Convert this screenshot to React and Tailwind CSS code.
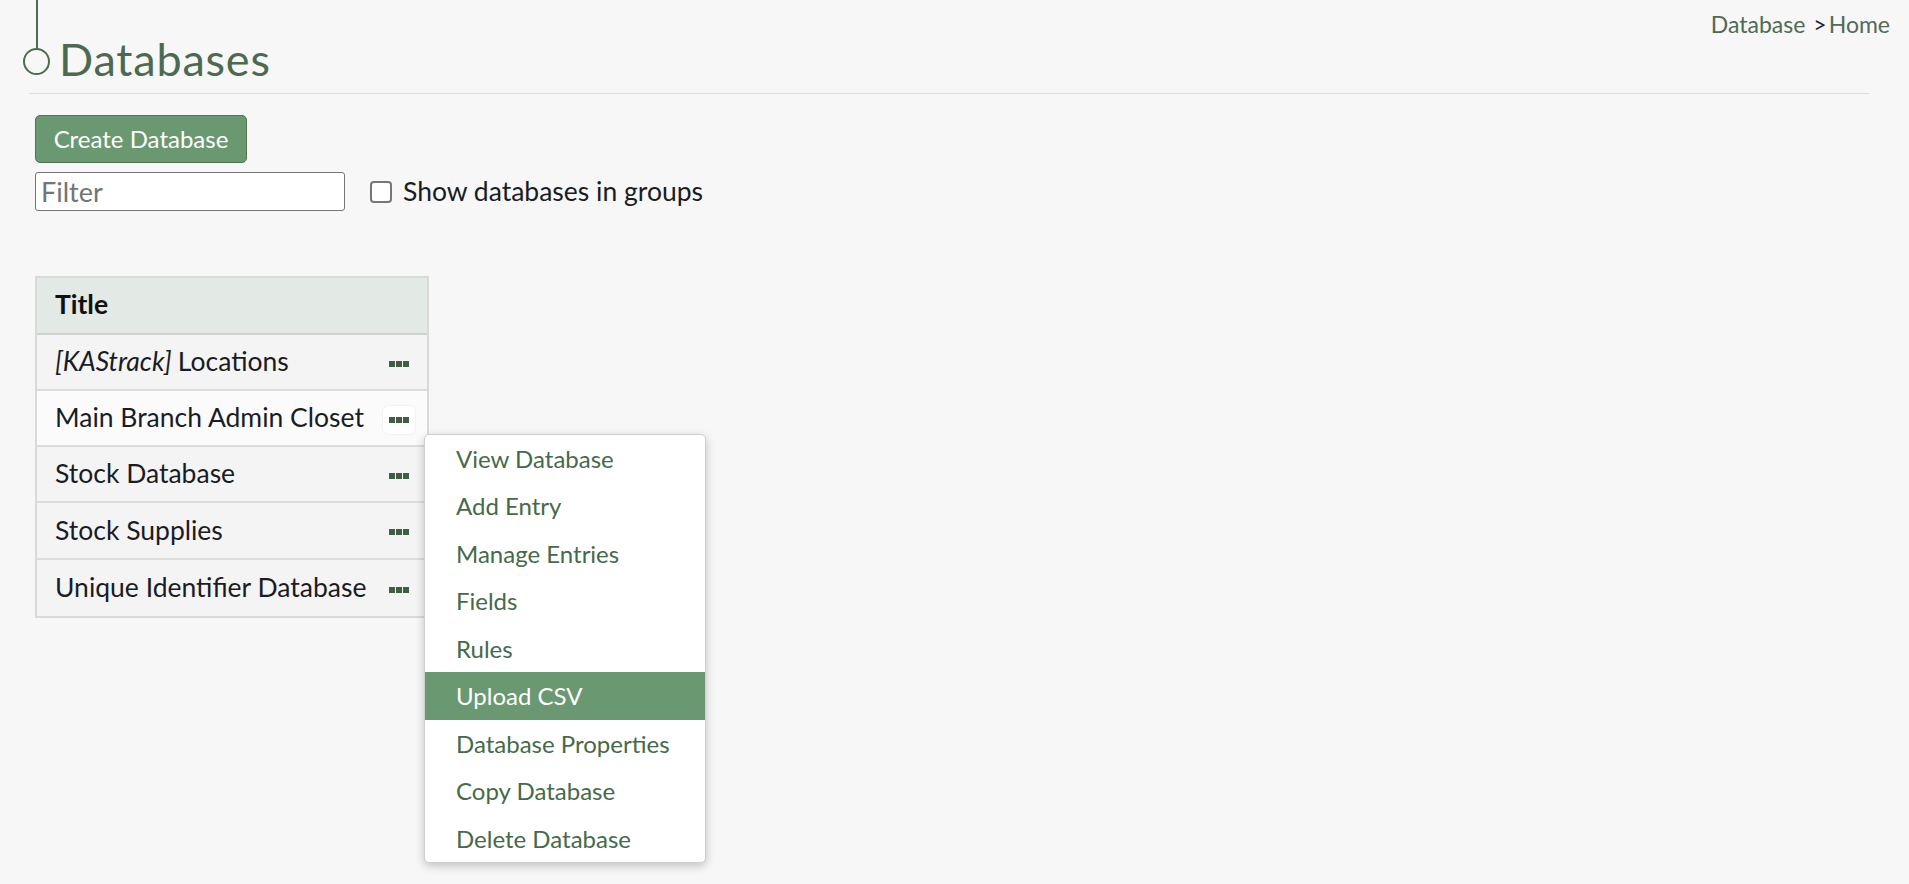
import React from 'react';

const menuItems = [
  'View Database',
  'Add Entry',
  'Manage Entries',
  'Fields',
  'Rules',
  'Upload CSV',
  'Database Properties',
  'Copy Database',
  'Delete Database',
];

const rows = [
  { tag: '[KAStrack]', name: 'Locations' },
  { name: 'Main Branch Admin Closet', hover: true },
  { name: 'Stock Database' },
  { name: 'Stock Supplies' },
  { name: 'Unique Identifier Database' },
];

function Dots({ active }) {
  return (
    <button
      className={`mt-[4px] flex h-[28px] w-[32px] items-center justify-center gap-[1px] rounded-[5px] ${
        active ? 'bg-white shadow-[0_0_2px_rgba(0,0,0,0.12)]' : ''
      }`}
    >
      <span className="h-[6px] w-[6px] bg-[#3f5e42]" />
      <span className="h-[6px] w-[6px] bg-[#3f5e42]" />
      <span className="h-[6px] w-[6px] bg-[#3f5e42]" />
    </button>
  );
}

export default function App() {
  return (
    <div className="min-h-screen bg-[#f7f7f7] font-['Lato','Liberation_Sans',sans-serif] text-[#1a1c24]">
      {/* Header */}
      <div className="flex items-start justify-between">
        <div className="ml-[23px] flex">
          <div className="flex w-[27px] flex-col items-center">
            <div className="h-[48px] w-[2px] bg-[#4d6b50]" />
            <div className="h-[27px] w-[27px] rounded-full border-2 border-[#4d6b50]" />
          </div>
          <h1 className="ml-[9px] mt-[33px] text-[45px] leading-[52px] tracking-[0.8px] text-[#4b6a4f]">Databases</h1>
        </div>
        <div className="pr-[19px] pt-[9px] text-[23px] leading-[30px]">
          <span className="text-[#4e6a53]">Database</span>
          <span className="ml-[8px] text-[#1c2738]">&gt;</span>
          <span className="ml-[2px] text-[#56695b]">Home</span>
        </div>
      </div>
      <div className="ml-[29px] mr-[40px] mt-[8px] h-px bg-[#dedede]" />

      {/* Controls */}
      <div className="ml-[35px] mt-[21px]">
        <button className="h-[48px] w-[212px] rounded-[5px] border border-[#4f7555] bg-[#6a9870] text-[24px] text-white">
          Create Database
        </button>
        <div className="mt-[9px] flex items-center">
          <input
            placeholder="Filter"
            className="h-[39px] w-[310px] rounded-[3px] border border-[#767676] bg-white px-[5px] text-[27px] placeholder:text-[#757575]"
          />
          <label className="ml-[25px] flex items-center text-[26.5px]">
            <span className="h-[22px] w-[22px] rounded-[4px] border-2 border-[#767676] bg-white" />
            <span className="ml-[11px]">Show databases in groups</span>
          </label>
        </div>
      </div>

      {/* Table */}
      <div className="relative ml-[35px] mt-[64px] w-[394px]">
        <div className="border-2 border-[#dadada]">
          <div className="flex h-[57px] items-center border-b-2 border-[#d0d0d0] bg-[#e3e9e4] px-[18px] text-[26.5px] font-bold text-[#111]">
            Title
          </div>
          {rows.map((r, i) => (
            <div
              key={i}
              className={`flex h-[56.2px] items-center justify-between pl-[18px] pr-[12px] text-[26.5px] ${
                i < rows.length - 1 ? 'border-b-2 border-[#dcdcdc]' : ''
              } ${r.hover ? 'bg-[#fbfbfb]' : 'bg-[#f4f4f4]'}`}
            >
              <span className="whitespace-nowrap">
                {r.tag && <i>{r.tag} </i>}
                {r.name}
              </span>
              <Dots active={r.hover} />
            </div>
          ))}
        </div>

        {/* Dropdown menu */}
        <div className="absolute left-[389px] top-[158px] w-[282px] rounded-[5px] border border-[#cfcfcf] bg-white shadow-[0_3px_10px_rgba(0,0,0,0.22)]">
          {menuItems.map((m) => (
            <div
              key={m}
              className={`flex h-[47.5px] items-center pl-[31px] text-[24px] ${
                m === 'Upload CSV' ? 'bg-[#6a9870] text-white' : 'text-[#466a49]'
              }`}
            >
              {m}
            </div>
          ))}
        </div>
      </div>
    </div>
  );
}
